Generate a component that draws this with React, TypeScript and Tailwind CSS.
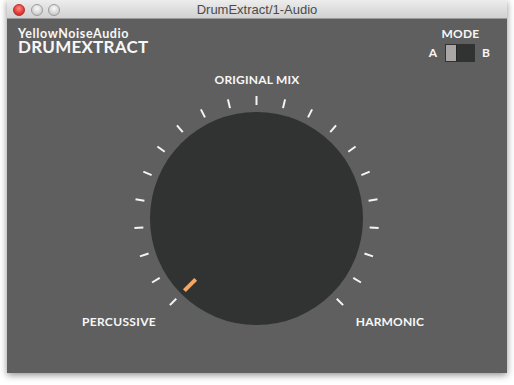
import React from "react";

const TICKS = Array.from({ length: 21 }, (_, i) => -135 + i * 13.5);

function Knob() {
    const cx = 129.5;
    const cy = 130.5;
    const pt = (deg: number, r: number) => {
        const a = (deg * Math.PI) / 180;
        return { x: cx + r * Math.sin(a), y: cy - r * Math.cos(a) };
    };
    const p1 = pt(-135, 86);
    const p2 = pt(-135, 102);

    return (
        <svg width="260" height="260" viewBox="0 0 260 260" className="block">
            {TICKS.map((deg) => {
                const a = pt(deg, 113.5);
                const b = pt(deg, 122.5);
                return (
                    <line key={deg} x1={a.x} y1={a.y} x2={b.x} y2={b.y} stroke="#f4f4f4" strokeWidth="2" />
                );
            })}
            <circle cx={cx} cy={cy} r="106.5" fill="#313232" />
            <line x1={p1.x} y1={p1.y} x2={p2.x} y2={p2.y} stroke="#f2a766" strokeWidth="4" />
        </svg>
    );
}

function Light({ red }: { red?: boolean }) {
    return (
        <span
            className={
                red
                    ? "w-[12px] h-[12px] rounded-full border border-[#b0312b] bg-[radial-gradient(circle_at_50%_35%,#ff8a80,#e5403a_55%,#b3221d)]"
                    : "w-[12px] h-[12px] rounded-full border border-[#9c9c9c] bg-[radial-gradient(circle_at_50%_35%,#fafafa,#d8d8d8_55%,#b9b9b9)]"
            }
        />
    );
}

export default function App() {
    return (
        <div className="w-[514px] h-[385px] bg-white pl-[7px]">
            <div
                className="w-[500px] h-[373px] flex flex-col shadow-[0_2px_7px_rgba(0,0,0,0.45)]"
                style={{ fontFamily: "Lato, 'Open Sans', sans-serif" }}
            >
                <header className="h-[19px] relative flex items-center bg-gradient-to-b from-[#ededed] to-[#d1d1d1] border-b border-[#9a9a9a]">
                    <div className="flex items-center gap-[5.5px] pl-[6px] pt-[1px]">
                        <Light red />
                        <Light />
                        <Light />
                    </div>
                    <span
                        className="absolute inset-x-0 text-center text-[13px] leading-[19px] text-[#4b4b4b]"
                        style={{ fontFamily: "'Liberation Sans', Arial, sans-serif" }}
                    >
                        DrumExtract/1-Audio
                    </span>
                </header>

                <main className="flex-1 flex flex-col bg-[#5f5f5f] text-[#f7f7f7] font-bold">
                    <div className="h-[45px] flex justify-between pl-[11px] pr-[17px]">
                        <div className="flex flex-col items-start pt-[8.5px]">
                            <span className="text-[12.5px] leading-[12px] tracking-[0.6px]">YellowNoiseAudio</span>
                            <span className="text-[17px] leading-[14px] tracking-[0.25px]">DRUMEXTRACT</span>
                        </div>
                        <div className="flex flex-col items-end pt-[8px]">
                            <span className="text-[12px] leading-[14px] w-[59px] text-center mr-[-7px] pr-[7px] pl-[7px] box-content tracking-[0.2px]">
                                MODE
                            </span>
                            <div className="flex items-center mt-[3px]">
                                <span className="text-[12px] leading-[18px] mr-[8px]">A</span>
                                <div className="w-[30px] h-[18px] bg-[#313232] p-[1px] flex">
                                    <div className="w-[11px] h-[16px] bg-[#aaa6a6] border-r border-[#262727]" />
                                </div>
                                <span className="text-[12px] leading-[18px] ml-[7px]">B</span>
                            </div>
                        </div>
                    </div>

                    <div className="grid">
                        <div className="col-start-1 row-start-1 flex flex-col items-center pt-[9px]">
                            <span className="text-[12px] leading-[14px] tracking-[0.2px]">ORIGINAL MIX</span>
                            <div className="mt-[1px]">
                                <Knob />
                            </div>
                        </div>
                        <div className="col-start-1 row-start-1 flex justify-between items-start pt-[251px] pl-[37px] pr-[42px]">
                            <span className="w-[150px] text-center text-[12px] leading-[14px] tracking-[0.35px]">PERCUSSIVE</span>
                            <span className="w-[150px] text-center text-[12px] leading-[14px] tracking-[0.15px]">HARMONIC</span>
                        </div>
                    </div>
                </main>
            </div>
        </div>
    );
}
